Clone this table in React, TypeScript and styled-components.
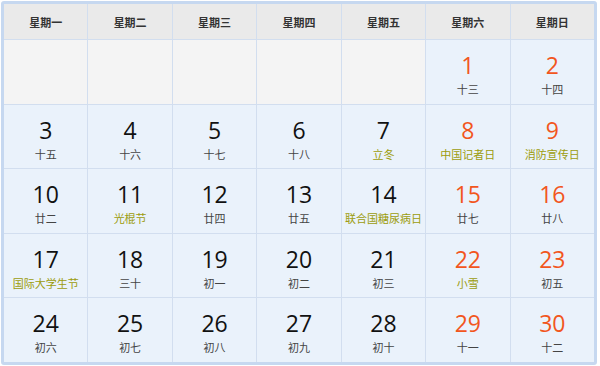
import React from 'react';
import styled, { createGlobalStyle } from 'styled-components';

type DayKind = 'normal' | 'weekend';

interface IDay {
  day?: number;
  sub?: string;
  festival?: boolean;
}

const WEEK_NAMES = ['星期一', '星期二', '星期三', '星期四', '星期五', '星期六', '星期日'];

const DAYS: IDay[] = [
  {},
  {},
  {},
  {},
  {},
  { day: 1, sub: '十三' },
  { day: 2, sub: '十四' },
  { day: 3, sub: '十五' },
  { day: 4, sub: '十六' },
  { day: 5, sub: '十七' },
  { day: 6, sub: '十八' },
  { day: 7, sub: '立冬', festival: true },
  { day: 8, sub: '中国记者日', festival: true },
  { day: 9, sub: '消防宣传日', festival: true },
  { day: 10, sub: '廿二' },
  { day: 11, sub: '光棍节', festival: true },
  { day: 12, sub: '廿四' },
  { day: 13, sub: '廿五' },
  { day: 14, sub: '联合国糖尿病日', festival: true },
  { day: 15, sub: '廿七' },
  { day: 16, sub: '廿八' },
  { day: 17, sub: '国际大学生节', festival: true },
  { day: 18, sub: '三十' },
  { day: 19, sub: '初一' },
  { day: 20, sub: '初二' },
  { day: 21, sub: '初三' },
  { day: 22, sub: '小雪', festival: true },
  { day: 23, sub: '初五' },
  { day: 24, sub: '初六' },
  { day: 25, sub: '初七' },
  { day: 26, sub: '初八' },
  { day: 27, sub: '初九' },
  { day: 28, sub: '初十' },
  { day: 29, sub: '十一' },
  { day: 30, sub: '十二' },
];

const GlobalStyle = createGlobalStyle`
  html, body {
    margin: 0;
    padding: 0;
    background: #ffffff;
  }
  body {
    font-family: "Noto Sans CJK SC", sans-serif;
  }
`;

export default function App() {
  return (
    <>
      <GlobalStyle />
      <Page>
        <Calendar>
          {WEEK_NAMES.map(name => (
            <HeadCell key={name}>{name}</HeadCell>
          ))}
          {DAYS.map((d, i) => {
            const kind: DayKind = i % 7 >= 5 ? 'weekend' : 'normal';
            if (!d.day) return <EmptyCell key={`e${i}`} />;
            return (
              <DayCell key={d.day}>
                <DayNumber $kind={kind}>{d.day}</DayNumber>
                <DaySub $festival={!!d.festival}>{d.sub}</DaySub>
              </DayCell>
            );
          })}
        </Calendar>
      </Page>
    </>
  );
}

const Page = styled.div`
  width: 600px;
  height: 366px;
  padding: 1px;
  box-sizing: border-box;
`;

const Calendar = styled.div`
  width: 596px;
  height: 364px;
  box-sizing: border-box;
  border: 3px solid #c6d8f0;
  border-radius: 3px;
  background: #d2deef;
  display: grid;
  grid-template-columns: repeat(7, 1fr);
  grid-template-rows: 35px repeat(5, 1fr);
  gap: 1px;
  overflow: hidden;
`;

const HeadCell = styled.div`
  background: #eaeaea;
  display: flex;
  align-items: center;
  justify-content: center;
  font-size: 11px;
  font-weight: bold;
  color: #333333;
  font-family: "Noto Sans CJK SC", sans-serif;
`;

const EmptyCell = styled.div`
  background: #f4f4f4;
`;

const DayCell = styled.div`
  background: #eaf2fb;
  display: flex;
  flex-direction: column;
  align-items: center;
  padding-top: 9px;
  box-sizing: border-box;
`;

const DayNumber = styled.div<{ $kind: DayKind }>`
  font-family: "Open Sans", "Liberation Sans", sans-serif;
  font-size: 23px;
  line-height: 32px;
  color: ${p => (p.$kind === 'weekend' ? '#f2561d' : '#111111')};
`;

const DaySub = styled.div<{ $festival: boolean }>`
  font-size: 11px;
  line-height: 16px;
  white-space: nowrap;
  font-family: "Noto Sans CJK SC", sans-serif;
  color: ${p => (p.$festival ? '#9c9c0c' : '#444444')};
`;
